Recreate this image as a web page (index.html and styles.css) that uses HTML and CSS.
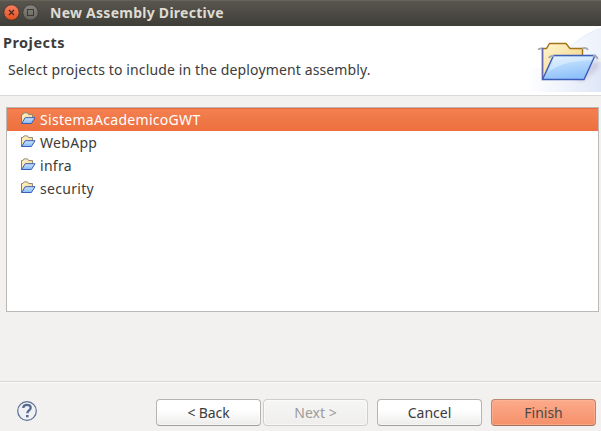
FILE: index.html
```html
<!DOCTYPE html>
<html lang="en">
<head>
<meta charset="utf-8">
<title>New Assembly Directive</title>
<link rel="stylesheet" href="styles.css">
</head>
<body>
<svg width="0" height="0" class="defs">
  <defs>
    <linearGradient id="cream" x1="0" y1="0" x2="1" y2="1"><stop offset="0" stop-color="#fff6d0"/><stop offset="1" stop-color="#f2cd7c"/></linearGradient>
    <linearGradient id="blue" x1="0" y1="0" x2="0" y2="1"><stop offset="0" stop-color="#cde6ff"/><stop offset="1" stop-color="#82b8f5"/></linearGradient>
    <symbol id="folder" viewBox="0 0 16 13">
      <path d="M1.500 11.500V2.500H3L4 .9H7.500L8.500 2.500H12.500V6" fill="url(#cream)" stroke="#958a70"/>
      <path d="M1.500 11.500V3" stroke="#7779a8"/>
      <path d="M5.200 5.700H15L11.400 11.500H1.700Z" fill="url(#blue)" stroke="#3a5db5"/>
    </symbol>
  </defs>
</svg>
<div class="window">
  <header class="titlebar">
    <svg class="controls" width="40" height="26" viewBox="0 0 40 26">
      <defs>
        <linearGradient id="close" x1="0" y1="0" x2="0" y2="1"><stop offset="0" stop-color="#f38163"/><stop offset="1" stop-color="#e6501f"/></linearGradient>
        <linearGradient id="max" x1="0" y1="0" x2="0" y2="1"><stop offset="0" stop-color="#878680"/><stop offset="1" stop-color="#65635c"/></linearGradient>
      </defs>
      <circle cx="11.500" cy="12.500" r="7.700" fill="url(#close)" stroke="#35342f" stroke-width=".8"/>
      <path d="M9 10l5 5M14 10l-5 5" stroke="#4a2a1e" stroke-width="1.300"/>
      <circle cx="30.500" cy="12.500" r="7.700" fill="url(#max)" stroke="#393832" stroke-width=".8"/>
      <rect x="27.500" y="9.500" width="6" height="6" fill="none" stroke="#3b3a35"/>
    </svg>
    <h1 class="title">New Assembly Directive</h1>
  </header>
  <section class="banner">
    <div class="banner-text">
      <h2 class="heading">Projects</h2>
      <p class="message">Select projects to include in the deployment assembly.</p>
    </div>
    <svg class="banner-art" width="75" height="66" viewBox="526 26 75 66">
      <defs>
        <linearGradient id="haze" x1="0" y1="0" x2="1" y2="0"><stop offset="0" stop-color="#fff"/><stop offset="1" stop-color="#dfe7f7"/></linearGradient>
        <linearGradient id="haze2" x1="0" y1="0" x2="1" y2="0"><stop offset="0" stop-color="#f9fbff"/><stop offset="1" stop-color="#edf2fb"/></linearGradient>
        <linearGradient id="front" x1="0" y1="0" x2="0.300" y2="1"><stop offset="0" stop-color="#d8edff"/><stop offset="1" stop-color="#8fc1fa"/></linearGradient>
        <filter id="soft"><feGaussianBlur stdDeviation="2"/></filter>
      </defs>
      <rect x="526" y="26" width="75" height="66" fill="url(#haze)"/>
      <path d="M526 26H601V28C575 36 563 55 550 66L526 70Z" fill="#fff"/>
      <path d="M601 28C577 38 564 52 557 66L601 62Z" fill="url(#haze2)"/>
      <path d="M575 80L598 57L599 68L583 81Z" fill="#9b8ea8" opacity=".3" filter="url(#soft)"/>
      <path d="M542.500 79V48.500H546.500L549.500 43.500H566L570 48.500H582.500V56" fill="url(#cream)" stroke="#a07416" stroke-width="1.400"/>
      <path d="M538.500 50Q539 48 543 48.500M582 48.500Q587 47 588 50" fill="none" stroke="#aaa9a8" stroke-width="1.800"/>
      <path d="M542.500 79V48" fill="none" stroke="#6967ad" stroke-width="1.500"/>
      <path d="M553.500 55.500H595L584 79.500H542.500Z" fill="url(#front)" stroke="#3d5cb8" stroke-width="1.400"/>
      <path d="M554.500 57H593L592 60Q562 61 548 72Z" fill="#fff" opacity=".35"/>
      <path d="M549 58Q550 55.500 554 56M593 55.500Q597 56 597.500 59" fill="none" stroke="#a6a8ad" stroke-width="1.800"/>
    </svg>
  </section>
  <main class="content">
    <ul class="list">
      <li class="row selected"><svg class="icon"><use href="#folder"/></svg><span>SistemaAcademicoGWT</span></li>
      <li class="row"><svg class="icon"><use href="#folder"/></svg><span>WebApp</span></li>
      <li class="row"><svg class="icon"><use href="#folder"/></svg><span>infra</span></li>
      <li class="row"><svg class="icon"><use href="#folder"/></svg><span>security</span></li>
    </ul>
  </main>
  <footer class="footer">
    <svg class="help" width="22" height="22" viewBox="0 0 22 22">
      <circle cx="11" cy="11" r="9.300" fill="#f0f1f4" stroke="#5b6d94" stroke-width="1.200"/>
      <path d="M7.300 8C7.300 5.500 9 4.800 11 4.800C13.300 4.800 14.700 6 14.700 7.800C14.700 10.300 11.300 10.500 11.300 13.300" fill="none" stroke="#586a91" stroke-width="2.300"/>
      <rect x="10" y="15" width="2.600" height="2.300" fill="#586a91"/>
    </svg>
    <button class="btn back">&lt; Back</button>
    <button class="btn next" disabled>Next &gt;</button>
    <button class="btn cancel">Cancel</button>
    <button class="btn finish">Finish</button>
  </footer>
</div>
</body>
</html>
```
FILE: styles.css
```css
* { box-sizing: border-box; }
body { margin: 0; overflow: hidden; font: 14px/20px "Noto Sans", "Open Sans", sans-serif; color: #3c3c3c; }
h1, h2, p, ul { margin: 0; padding: 0; }
.defs { position: absolute; }
.window { width: 601px; height: 431px; display: flex; flex-direction: column; background: #f2f1f0; }
.titlebar { height: 26px; flex: none; display: flex; background: linear-gradient(#59564e, #3e3d38); border-top: 1px solid #65625a; }
.controls { margin-top: -1px; flex: none; }
.title { margin: 2px 0 0 10px; font-size: 14px; line-height: 20px; color: #dfdbd2; letter-spacing: .26px; white-space: nowrap; }
.banner { height: 70px; flex: none; display: flex; justify-content: space-between; background: #fff; border-bottom: 1px solid #d9d9d7; }
.banner-text { padding: 6px 0 0 3px; white-space: nowrap; }
.heading { font-size: 14.500px; line-height: 20px; letter-spacing: .45px; }
.message { padding: 8px 0 0 5px; letter-spacing: .13px; }
.banner-art { flex: none; }
.content { height: 286px; flex: none; padding: 11px 2px 0 6px; border-bottom: 1px solid #d8d7d5; box-shadow: 0 1px #fafafa; }
.list { height: 205px; background: #fff; border: 1px solid #bbb8b5; list-style: none; }
.row { height: 23px; padding-left: 13px; display: flex; align-items: center; white-space: nowrap; letter-spacing: .3px; }
.selected { color: #fff; background: linear-gradient(#f37f50, #ed703e); border-top: 1px solid #e96b3a; }
.icon { width: 16px; height: 13px; margin: -3px 4px 0 0; flex: none; }
.selected .icon { margin-top: -4px; }
.footer { flex: 1; display: flex; padding: 17px 5px 0 16px; }
.help { margin: 1px 118px 0 0; flex: none; }
.btn { width: 105px; height: 27px; margin: 0; padding: 0; flex: none; font: inherit; color: #3c3c3c; border: 1px solid #b7b4b0; border-bottom-color: #a19e9b; border-radius: 4px; background: linear-gradient(#fff 40%, #ececea); box-shadow: inset 0 0 0 1px #ffffff80; }
.back { letter-spacing: -.1px; }
.next { margin-left: 2px; color: #9d9b99; border-color: #cfcdca; background: linear-gradient(#f6f6f5, #efeeed); }
.cancel, .finish { margin-left: 9px; }
.finish { color: #4b4948; border-color: #b98770; border-bottom-color: #a4705b; background: linear-gradient(#fcab8b, #f5906a); box-shadow: inset 0 0 0 1px #ffb99a80; }
```
